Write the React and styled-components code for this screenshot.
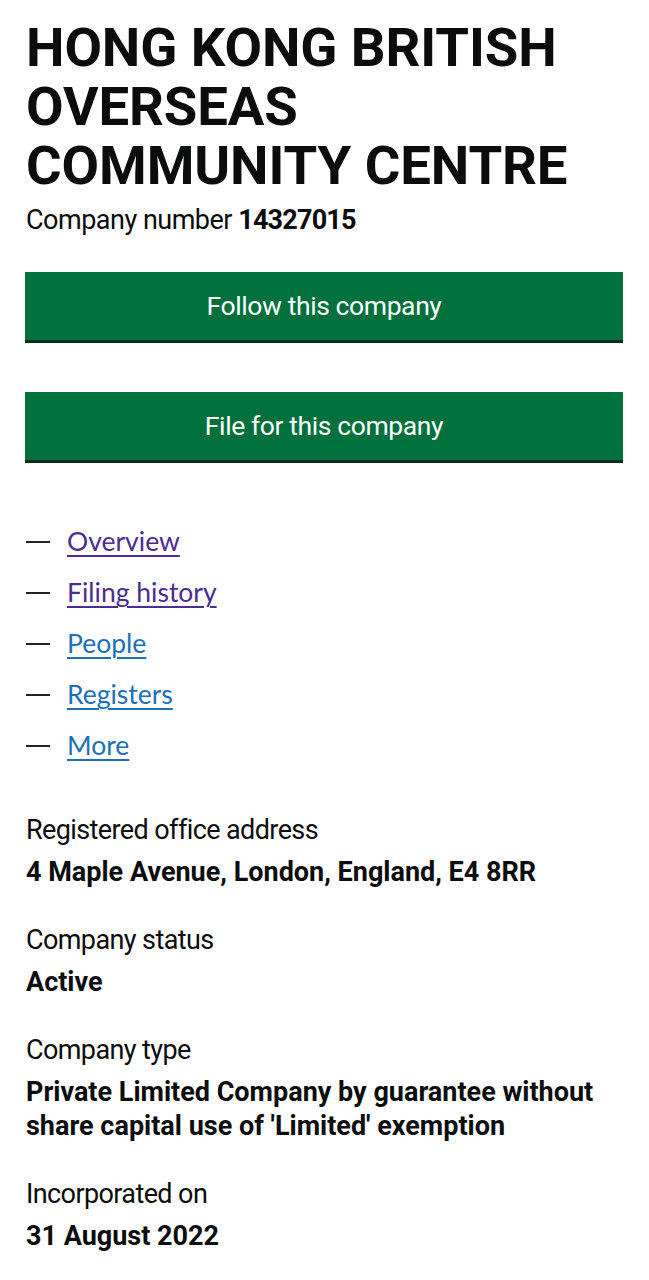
import styled, { createGlobalStyle } from 'styled-components';

const GlobalStyle = createGlobalStyle`
  body {
    margin: 0;
    background: #ffffff;
    color: #0b0c0c;
    font-family: Roboto, "Liberation Sans", sans-serif;
  }
`;

const Page = styled.main`
  padding: 18px 26px 40px 25px;
`;

const Title = styled.h1`
  margin: 0 0 0 1px;
  font-family: Roboto, "Liberation Sans", sans-serif;
  font-size: 54.5px;
  font-weight: 700;
  line-height: 59px;
  letter-spacing: -0.1px;
`;

const CompanyNumber = styled.p`
  margin: 8px 0 0 1px;
  font-size: 27px;
  line-height: 34px;
  letter-spacing: -0.5px;

  strong {
    font-weight: 700;
    letter-spacing: -0.8px;
  }
`;

const Actions = styled.div`
  display: flex;
  flex-direction: column;
  gap: 49px;
  margin-top: 35px;
`;

const GreenButton = styled.button`
  display: block;
  width: 100%;
  height: 71px;
  padding: 0 0 4px;
  border: 0;
  border-radius: 0;
  background: #00703c;
  box-shadow: inset 0 -3px 0 #002d18;
  color: #ffffff;
  font-family: Roboto, "Liberation Sans", sans-serif;
  font-size: 26.5px;
  letter-spacing: -0.4px;
  cursor: pointer;
`;

const Nav = styled.ul`
  list-style: none;
  margin: 61px 0 0;
  padding: 0;
  display: flex;
  flex-direction: column;
  gap: 17px;
`;

const NavItem = styled.li`
  display: flex;
  align-items: center;
  height: 34px;

  &::before {
    content: '';
    flex: none;
    width: 24px;
    height: 2px;
    background: #222;
    margin: 2px 17px 0 1px;
  }
`;

const NavLink = styled.a`
  font-family: Lato, "Noto Sans", sans-serif;
  font-size: 26.5px;
  color: ${(p) => (p.$visited ? '#4c2c92' : '#1d70b8')};
  text-decoration: underline;
  text-underline-offset: 4px;
  text-decoration-thickness: 2px;
`;

const Details = styled.dl`
  margin: 51px 0 0 1px;
  display: flex;
  flex-direction: column;
  gap: 34px;
`;

const Group = styled.div`
  display: flex;
  flex-direction: column;
  gap: 8px;
`;

const Label = styled.dt`
  font-size: 27px;
  line-height: 34px;
  letter-spacing: -0.6px;
`;

const Value = styled.dd`
  margin: 0;
  font-size: 27px;
  line-height: 34px;
  font-weight: 700;
  letter-spacing: 0;
`;

const links = [
  { label: 'Overview', visited: true },
  { label: 'Filing history', visited: true },
  { label: 'People' },
  { label: 'Registers' },
  { label: 'More' },
];

const details = [
  ['Registered office address', '4 Maple Avenue, London, England, E4 8RR'],
  ['Company status', 'Active'],
  ['Company type', "Private Limited Company by guarantee without share capital use of 'Limited' exemption"],
  ['Incorporated on', '31 August 2022'],
];

export default function App() {
  return (
    <>
      <GlobalStyle />
      <Page>
        <Title>HONG KONG BRITISH OVERSEAS COMMUNITY CENTRE</Title>
        <CompanyNumber>
          Company number <strong>14327015</strong>
        </CompanyNumber>

        <Actions>
          <GreenButton>Follow this company</GreenButton>
          <GreenButton>File for this company</GreenButton>
        </Actions>

        <Nav>
          {links.map((l) => (
            <NavItem key={l.label}>
              <NavLink href="#" $visited={l.visited}>
                {l.label}
              </NavLink>
            </NavItem>
          ))}
        </Nav>

        <Details>
          {details.map(([label, value]) => (
            <Group key={label}>
              <Label>{label}</Label>
              <Value>{value}</Value>
            </Group>
          ))}
        </Details>
      </Page>
    </>
  );
}
